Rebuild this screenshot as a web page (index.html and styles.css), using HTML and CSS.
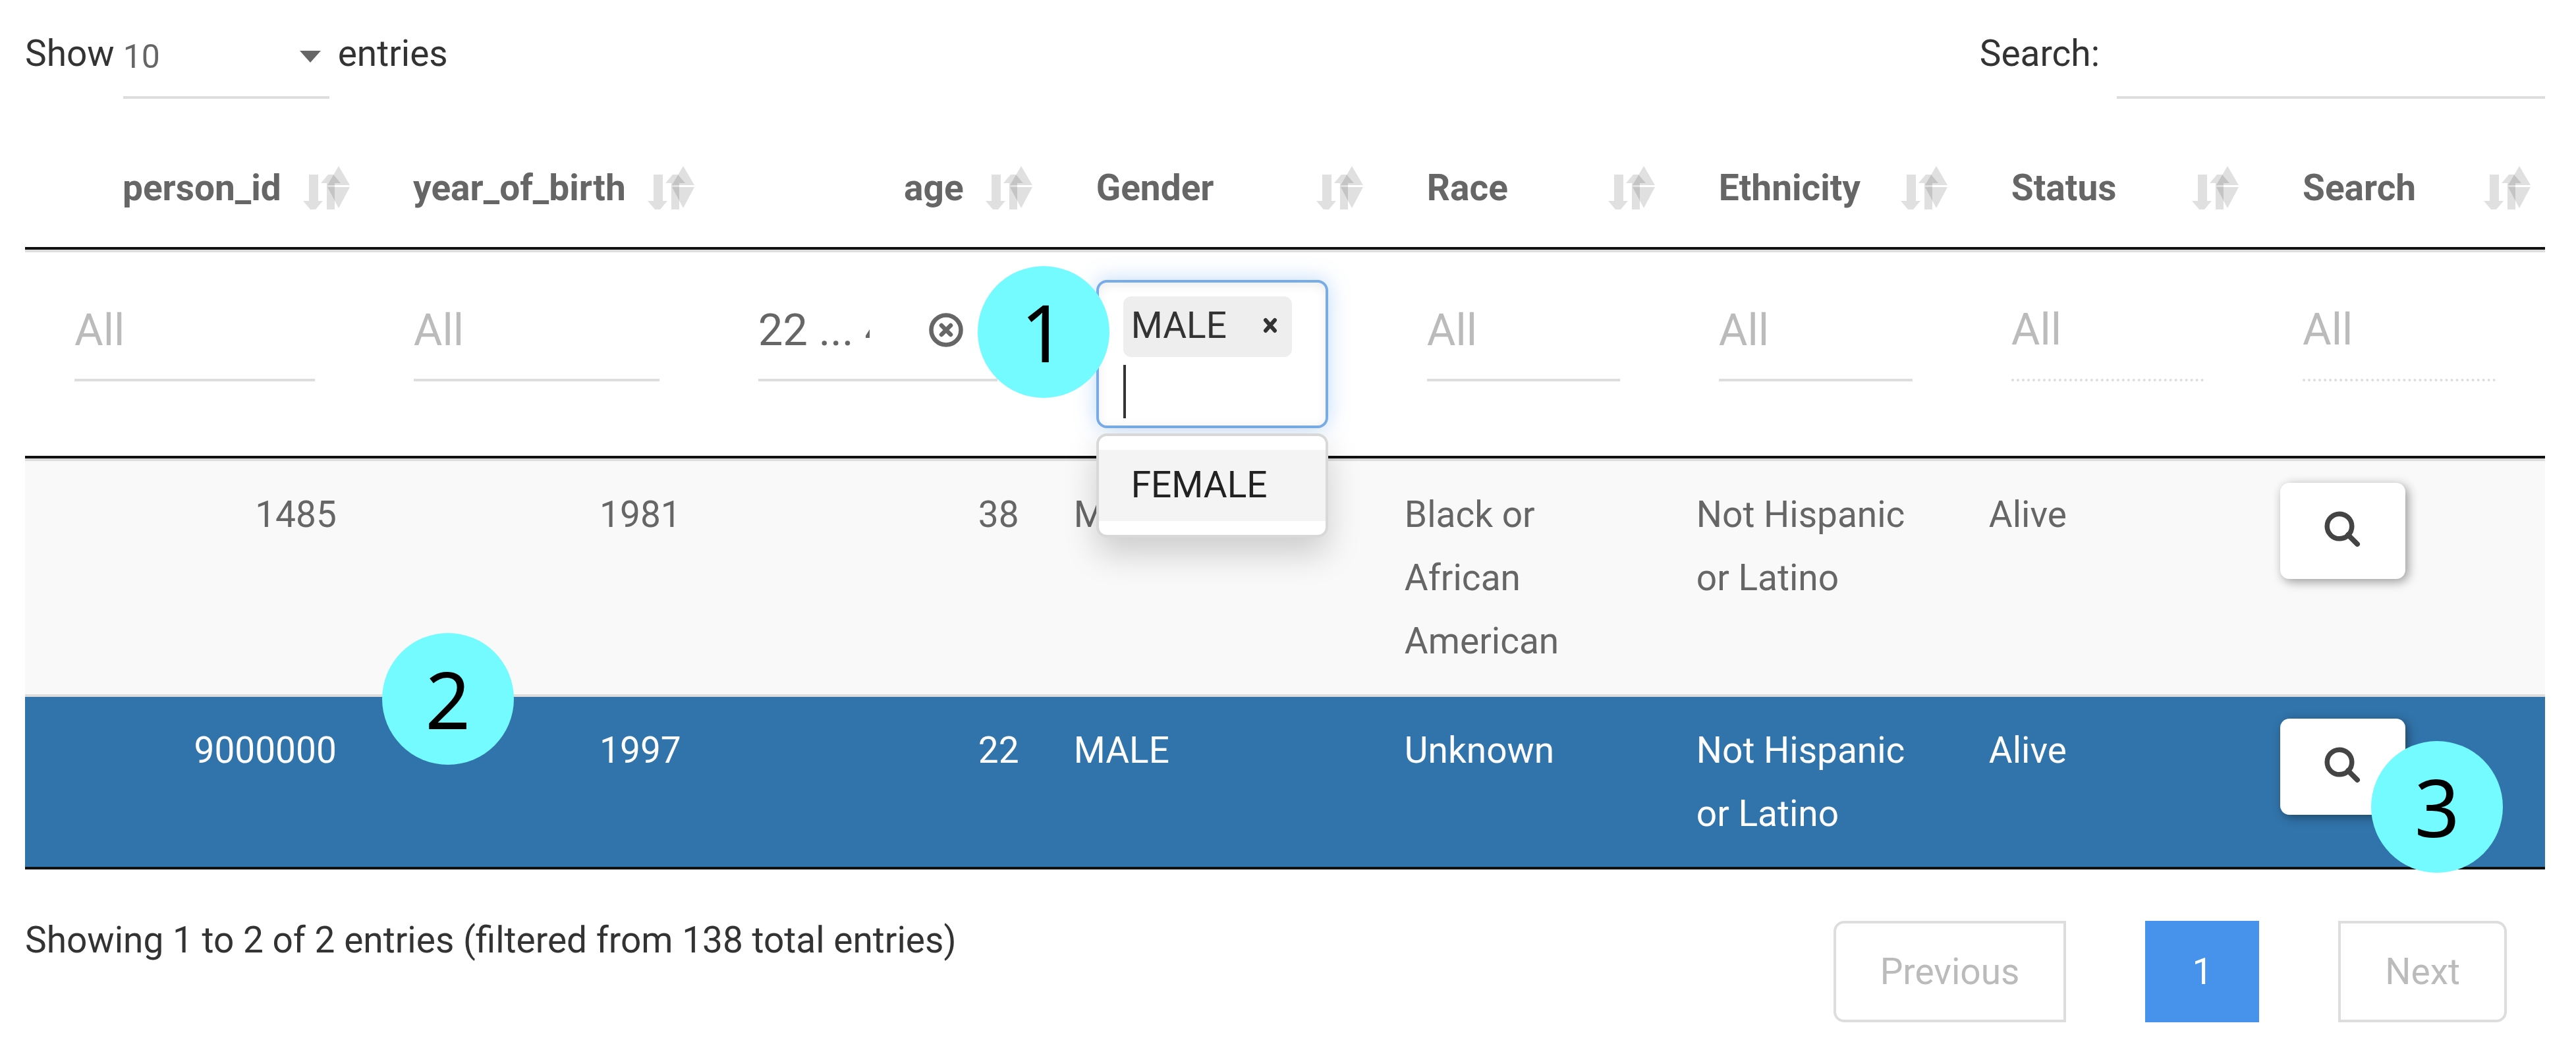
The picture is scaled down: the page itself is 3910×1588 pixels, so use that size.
FILE: index.html
```html
<!DOCTYPE html>
<html lang="en">
<head>
<meta charset="utf-8">
<title>Persons</title>
<link rel="stylesheet" href="styles.css">
</head>
<body>
<svg class="defs" aria-hidden="true">
  <symbol id="sort" viewBox="0 0 72 66">
    <path d="M9 13h14v40h7L19 66h-8L0 53h9z" opacity=".12"/>
    <path d="M38 13h8l11 13h-9v40H36V26h-9z" opacity=".12"/>
    <path d="M54 0l17 29H37z" opacity=".12"/>
    <path d="M37 32h34L54 64z" opacity=".12"/>
  </symbol>
  <symbol id="lens" viewBox="0 0 56 56">
    <circle cx="23" cy="23" r="18.800" fill="none" stroke="currentColor" stroke-width="7.500"/>
    <path d="M36 36L50 50" stroke="currentColor" stroke-width="8" stroke-linecap="round"/>
  </symbol>
</svg>

<div class="toolbar">
  <div class="length">
    <label for="length">Show</label>
    <span class="select-wrap">
      <select id="length"><option>10</option><option>25</option></select>
      <svg class="arrow" viewBox="0 0 32 18" aria-hidden="true"><path d="M0 0h32L16 18z"/></svg>
    </span>
    <span class="text">entries</span>
  </div>
  <div class="search">
    <label for="search">Search:</label>
    <input id="search" type="search">
  </div>
</div>

<table class="grid">
  <colgroup>
    <col class="c-id"><col class="c-year"><col class="c-age"><col class="c-gender"><col class="c-race"><col class="c-eth"><col class="c-status"><col class="c-search">
  </colgroup>
  <thead>
    <tr class="heads">
      <th class="num"><button>person_id<svg><use href="#sort"/></svg></button></th>
      <th class="num"><button>year_of_birth<svg><use href="#sort"/></svg></button></th>
      <th class="num"><button>age<svg><use href="#sort"/></svg></button></th>
      <th><button>Gender<svg><use href="#sort"/></svg></button></th>
      <th><button>Race<svg><use href="#sort"/></svg></button></th>
      <th><button>Ethnicity<svg><use href="#sort"/></svg></button></th>
      <th><button>Status<svg><use href="#sort"/></svg></button></th>
      <th><button>Search<svg><use href="#sort"/></svg></button></th>
    </tr>
    <tr class="filters">
      <td><input class="filter" type="text" placeholder="All" aria-label="Filter person_id"></td>
      <td><input class="filter" type="text" placeholder="All" aria-label="Filter year_of_birth"></td>
      <td>
        <div class="clearable">
          <input class="filter" type="text" value="22 ... 45" aria-label="Filter age">
          <button class="clear" aria-label="Clear age"><svg viewBox="0 0 52 52"><circle cx="26" cy="26" r="22.500" fill="none" stroke="currentColor" stroke-width="6.500"/><path d="M19 19l14 14M33 19L19 33" stroke="currentColor" stroke-width="6.500" stroke-linecap="round"/></svg></button>
        </div>
      </td>
      <td>
        <div class="picker">
          <div class="picker-box">
            <span class="tag">MALE<button aria-label="Remove MALE"><svg viewBox="0 0 22 24"><path d="M4 4l14 16M18 4L4 20" stroke="currentColor" stroke-width="6" stroke-linecap="round"/></svg></button></span>
            <input class="picker-input" type="text" aria-label="Filter Gender">
          </div>
          <div class="menu" role="listbox"><div class="option" role="option">FEMALE</div></div>
        </div>
        <span class="badge badge-1">1</span>
      </td>
      <td><input class="filter" type="text" placeholder="All" aria-label="Filter Race"></td>
      <td><input class="filter" type="text" placeholder="All" aria-label="Filter Ethnicity"></td>
      <td><input class="filter" type="text" placeholder="All" aria-label="Filter Status" disabled></td>
      <td><input class="filter" type="text" placeholder="All" aria-label="Filter Search" disabled></td>
    </tr>
  </thead>
  <tbody>
    <tr>
      <td class="num">1485</td>
      <td class="num">1981<span class="badge badge-2">2</span></td>
      <td class="num">38</td>
      <td>MALE</td>
      <td>Black or African American</td>
      <td>Not Hispanic or Latino</td>
      <td>Alive</td>
      <td><button class="open" aria-label="Open 1485"><svg><use href="#lens"/></svg></button></td>
    </tr>
    <tr class="selected">
      <td class="num">9000000</td>
      <td class="num">1997</td>
      <td class="num">22</td>
      <td>MALE</td>
      <td>Unknown</td>
      <td>Not Hispanic or Latino</td>
      <td>Alive</td>
      <td><button class="open" aria-label="Open 9000000"><svg><use href="#lens"/></svg></button><span class="badge badge-3">3</span></td>
    </tr>
  </tbody>
</table>

<div class="footer">
  <div class="info">Showing 1 to 2 of 2 entries (filtered from 138 total entries)</div>
  <nav class="pages" aria-label="Pages">
    <button class="prev" disabled>Previous</button>
    <button class="current">1</button>
    <button class="next" disabled>Next</button>
  </nav>
</div>
</body>
</html>
```
FILE: styles.css
```css
* { box-sizing: border-box; }
body {
  margin: 0;
  padding: 0 47px 0 38px;
  background: #fff;
  color: #333;
  font: 55px/96px Roboto, sans-serif;
}
button, input, select { margin: 0; font: inherit; color: inherit; border: 0; background: none; outline: 0; border-radius: 0; }
button { padding: 0; }
svg { display: block; flex: none; }
.defs { position: absolute; width: 0; height: 0; }

.toolbar { display: flex; justify-content: space-between; padding-bottom: 45px; }
.length, .search { display: flex; align-items: flex-start; }
.length { gap: 13px; }
.search { gap: 26px; }
.toolbar label, .text { padding-top: 33px; }
.select-wrap { position: relative; display: block; }
.select-wrap select {
  appearance: none;
  display: block;
  width: 313px;
  height: 150px;
  padding: 26px 0 0;
  border-bottom: 4px solid #ddd;
  font-size: 50px;
  color: #666;
}
.arrow { position: absolute; right: 13px; top: 77px; width: 32px; height: 18px; fill: #666; pointer-events: none; }
.search input { width: 650px; height: 150px; border-bottom: 4px solid #ddd; }

.grid {
  width: 100%;
  table-layout: fixed;
  border-collapse: separate;
  border-spacing: 0;
  border-bottom: 4px solid #111;
  color: #666;
}
.c-id { width: 13.46%; }
.c-year { width: 13.67%; }
.c-age { width: 13.41%; }
.c-gender { width: 13.13%; }
.c-race { width: 11.58%; }
.c-eth { width: 11.61%; }
.c-status { width: 11.56%; }
.c-search { width: 11.58%; }

th { padding: 42px 21px 42px 75px; border-bottom: 4px solid #111; }
th button { display: flex; align-items: center; justify-content: space-between; gap: 33px; width: 100%; font-weight: 700; white-space: nowrap; }
th.num button { justify-content: flex-end; }
th svg { width: 72px; height: 66px; fill: #000; }

.filters td { position: relative; padding: 42px 75px; border-top: 4px solid #ddd; border-bottom: 4px solid #111; vertical-align: top; }
.filter { display: block; width: 100%; height: 154px; padding: 2px 0 0; border-bottom: 4px solid #ddd; font-size: 67px; }
.filter::placeholder { color: #bbb; opacity: 1; }
.filter:disabled { padding-top: 0; border-bottom-style: dotted; }
.clearable { position: relative; }
.clearable .filter { padding-right: 194px; }
.clear { position: absolute; right: 52px; top: 50px; width: 52px; height: 52px; }

.picker { position: relative; z-index: 1; }
.picker-box {
  height: 225px;
  padding: 21px 37px;
  border: 4px solid #77ace6;
  border-radius: 16px;
  background: #fff;
  color: #333;
  box-shadow: inset 0 4px 16px rgba(0, 0, 0, .075), 0 0 32px rgba(71, 147, 236, .35);
}
.tag { display: flex; align-items: center; justify-content: space-between; width: 256px; height: 92px; padding: 0 22px 4px 12px; border-radius: 12px; background: #eee; }
.tag svg { width: 22px; height: 24px; }
.picker-input { display: block; width: 100%; height: 81px; margin-top: 12px; padding: 0; border-left: 4px solid #333; }
.menu {
  position: absolute;
  top: 233px;
  left: 0;
  right: 0;
  padding: 21px 0;
  border: 4px solid #d8d8d8;
  border-radius: 16px;
  background: #fff;
  box-shadow: 0 25px 50px rgba(0, 0, 0, .175);
}
.option { padding: 5px 49px 7px; background: #f4f4f4; color: #222; }

tbody td { position: relative; padding: 33px 42px 33px 41px; border-top: 4px solid #ddd; vertical-align: top; background: #f9f9f9; }
.num { text-align: right; }
.selected td { background: #3174ab; color: #fff; }
.open { display: flex; align-items: center; justify-content: center; width: 190px; height: 146px; padding-bottom: 4px; border-radius: 14px; background: #fff; color: #444; box-shadow: 4px 4px 16px rgba(0, 0, 0, .4); }
.open svg { width: 56px; height: 56px; }

.badge {
  position: absolute;
  z-index: 2;
  width: 200px;
  height: 200px;
  border-radius: 50%;
  background: #73fbff;
  color: #000;
  font: 120px/200px "Noto Sans", sans-serif;
  text-align: center;
}
.badge-1 { left: -105px; top: 21px; }
.badge-2 { left: 27px; bottom: -107px; }
.badge-3 { left: 179px; top: 67px; }

.footer { display: flex; justify-content: space-between; align-items: flex-start; padding: 59px 58px 36px 0; }
.pages { display: flex; gap: 120px; padding-top: 19px; }
.pages button { height: 154px; padding: 0 67px; border: 4px solid #ddd; }
.pages button:disabled { color: #bbb; }
.pages .prev { border-radius: 16px 0 0 16px; }
.pages .next { border-radius: 0 16px 16px 0; }
.pages .current { border-color: #4793ec; background: #4793ec; color: #fff; }
```
